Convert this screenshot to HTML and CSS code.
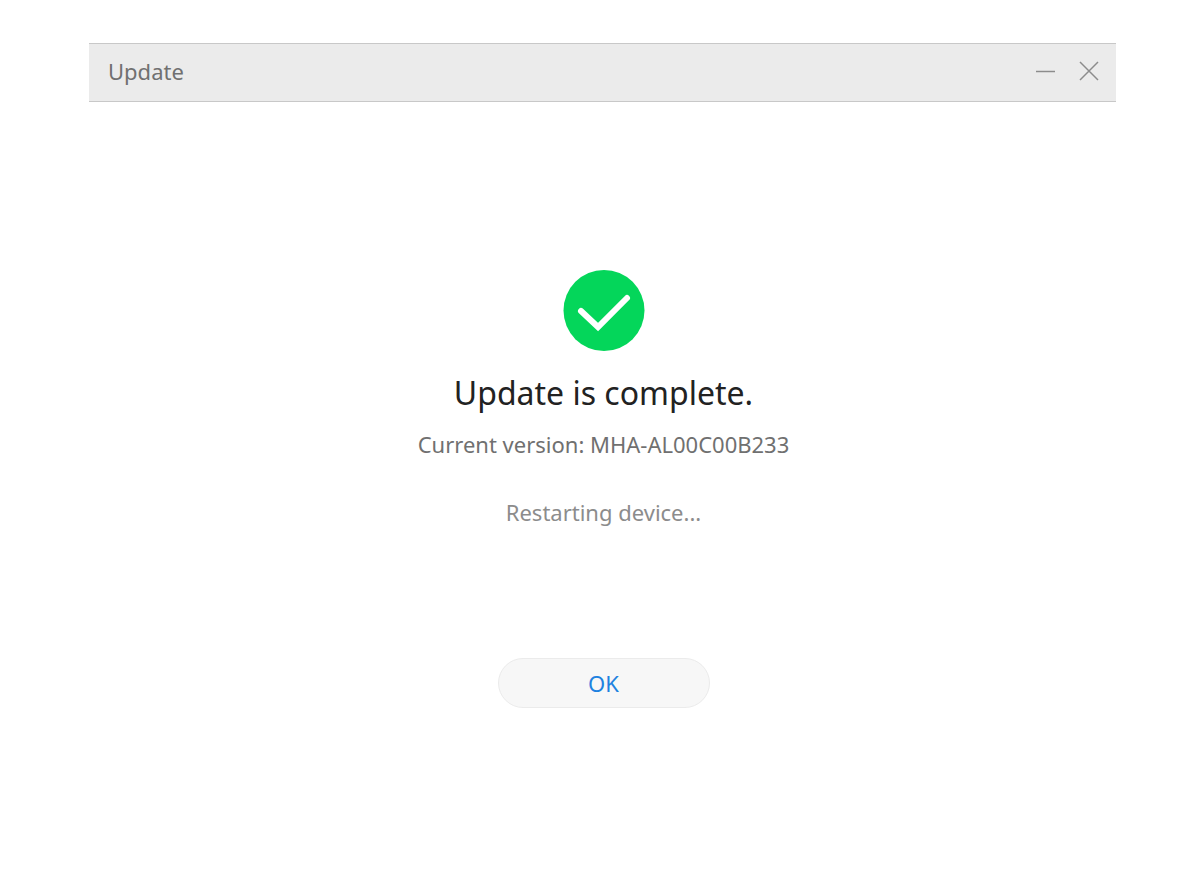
FILE: index.html
```html
<!DOCTYPE html>
<html lang="en">
<head>
    <meta charset="UTF-8">
    <meta name="viewport" content="width=device-width, initial-scale=1.0">
    <title>Update</title>
    <link rel="stylesheet" href="styles.css">
</head>
<body>

    <div class="window">
        <header class="titlebar">
            <h1 class="title">Update</h1>
            <div class="controls">
                <button type="button" class="control" aria-label="Minimize">
                    <svg width="20" height="20" viewBox="0 0 20 20"><path d="M1 10.5H20"/></svg>
                </button>
                <button type="button" class="control" aria-label="Close">
                    <svg width="20" height="20" viewBox="0 0 20 20"><path d="M1 1L19 19M19 1L1 19"/></svg>
                </button>
            </div>
        </header>

        <main class="content">
            <svg class="check" width="82" height="82" viewBox="0 0 82 82">
                <circle cx="41" cy="41.5" r="40.5"/>
                <path d="M18 42L35 58L64 29"/>
            </svg>
            <h2 class="heading">Update is complete.</h2>
            <p class="version">Current version: MHA-AL00C00B233</p>
            <p class="status">Restarting device...</p>
            <button type="button" class="btn">OK</button>
        </main>
    </div>

</body>
</html>
```
FILE: styles.css
```css
body {
    font-family: 'Noto Sans', sans-serif;
    background: #fff;
    margin: 0;
    padding: 43px 72px 0 89px;
}
.titlebar {
    display: flex;
    justify-content: space-between;
    align-items: center;
    height: 53px;
    padding: 0 17px 4px 19px;
    background: #ebebeb;
    border-top: 1px solid #c8c8c8;
    border-bottom: 1px solid #c8c8c8;
}
.title {
    margin: 0;
    font-size: 22px;
    font-weight: normal;
    line-height: 32px;
    color: #707070;
}
.controls {
    display: flex;
    gap: 24px;
}
.control {
    display: flex;
    padding: 0;
    background: none;
    border: none;
    cursor: pointer;
}
.control svg {
    fill: none;
    stroke: #8c8c8c;
    stroke-width: 1.5;
}
.content {
    display: flex;
    flex-direction: column;
    align-items: center;
    padding: 167px 0 0 2px;
    text-align: center;
}
.check circle {
    fill: #04d65a;
}
.check path {
    fill: none;
    stroke: #fff;
    stroke-width: 6;
    stroke-linecap: round;
    stroke-linejoin: miter;
}
.heading {
    margin: 20px 0 0;
    font-size: 32px;
    font-weight: normal;
    line-height: 44px;
    color: #222;
}
.version {
    margin: 13px 0 0;
    font-size: 22px;
    line-height: 32px;
    color: #707070;
}
.status {
    margin: 36px 0 0;
    font-size: 22px;
    line-height: 32px;
    color: #8c8c8c;
}
.btn {
    width: 212px;
    height: 50px;
    margin-top: 130px;
    padding: 0;
    background: #f7f7f7;
    border: 1px solid #ebebeb;
    border-radius: 25px;
    font-family: inherit;
    font-size: 22px;
    color: #1e82e0;
    cursor: pointer;
}
.btn:hover {
    background: #eee;
}
```
